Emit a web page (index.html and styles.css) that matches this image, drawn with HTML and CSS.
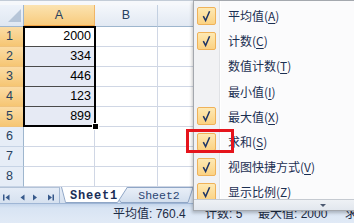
FILE: index.html
```html
<!DOCTYPE html>
<html lang="zh-CN">
<head>
<meta charset="utf-8">
<title>Excel 状态栏</title>
<link rel="stylesheet" href="styles.css">
</head>
<body>
<div class="app">
  <div class="topstrip"></div>

  <div class="sheet">
    <div class="corner">
      <svg width="24" height="22" viewBox="0 0 24 22"><polygon points="21,4 21,17 8,17" fill="#b6c5d8"/></svg>
    </div>
    <div class="ch ch-sel">A</div>
    <div class="ch">B</div>
    <div class="ch">C</div>

    <div class="rh rh-sel">1</div><div class="c a active">2000</div><div class="c"></div><div class="c"></div>
    <div class="rh rh-sel">2</div><div class="c a insel">334</div><div class="c"></div><div class="c"></div>
    <div class="rh rh-sel">3</div><div class="c a insel">446</div><div class="c"></div><div class="c"></div>
    <div class="rh rh-sel">4</div><div class="c a insel">123</div><div class="c"></div><div class="c"></div>
    <div class="rh rh-sel">5</div><div class="c a insel last">899</div><div class="c"></div><div class="c"></div>
    <div class="rh">6</div><div class="c"></div><div class="c"></div><div class="c"></div>
    <div class="rh">7</div><div class="c"></div><div class="c"></div><div class="c"></div>
    <div class="rh">8</div><div class="c"></div><div class="c"></div><div class="c"></div>

    <div class="selection"><span class="handle"></span></div>
  </div>

  <div class="tabbar">
    <div class="nav">
      <svg width="60" height="16" viewBox="0 0 60 16">
        <g fill="#37598b">
          <rect x="3" y="6.5" width="1.5" height="6"/>
          <path d="M9.5 6.5 L9.5 12.5 L5.5 9.5 Z"/>
          <path d="M24.5 6.5 L24.5 12.5 L20.5 9.5 Z"/>
          <path d="M33 6.5 L33 12.5 L37 9.5 Z"/>
          <path d="M48 6.5 L48 12.5 L52 9.5 Z"/>
          <rect x="52.5" y="6.5" width="1.5" height="6"/>
        </g>
      </svg>
    </div>
    <div class="tabs">
      <svg class="tabshape" width="140" height="16" viewBox="0 0 140 16">
        <defs>
          <linearGradient id="g2" x1="0" y1="0" x2="0" y2="1">
            <stop offset="0" stop-color="#e9eff8"/>
            <stop offset="1" stop-color="#d2deed"/>
          </linearGradient>
        </defs>
        <line x1="60" y1="0.5" x2="140" y2="0.5" stroke="#8fa6c6"/>
        <polygon points="50,0.5 132,0.5 127,15.5 60,15.5" fill="url(#g2)" stroke="#8fa6c6"/>
        <polygon points="0,-1 67,-1 57,15.5 4,15.5" fill="#ffffff"/>
        <path d="M0.5 0 L4.5 15.5 L56.5 15.5 L66.5 0" fill="none" stroke="#8fa6c6"/>
      </svg>
      <span class="tab t1">Sheet1</span>
      <span class="tab t2">Sheet2</span>
    </div>
  </div>

  <div class="statusbar">
    <span class="stat s1">平均值: 760.4</span>
    <span class="stat s2">计数: 5</span>
    <span class="stat s3">最大值: 2000</span>
    <span class="stat">求和: 3802</span>
  </div>

  <div class="menu">
    <div class="items">
      <div class="item"><span class="slot"><span class="chk"><svg width="17" height="16" viewBox="0 0 17 16"><path d="M5.3 8.2 L7.6 12.6 L11.6 3.2" fill="none" stroke="#1d3466" stroke-width="1.5"/></svg></span></span><span class="label">平均值(<u>A</u>)</span></div>
      <div class="item"><span class="slot"><span class="chk"><svg width="17" height="16" viewBox="0 0 17 16"><path d="M5.3 8.2 L7.6 12.6 L11.6 3.2" fill="none" stroke="#1d3466" stroke-width="1.5"/></svg></span></span><span class="label">计数(<u>C</u>)</span></div>
      <div class="item"><span class="slot"></span><span class="label">数值计数(<u>T</u>)</span></div>
      <div class="item"><span class="slot"></span><span class="label">最小值(<u>I</u>)</span></div>
      <div class="item"><span class="slot"><span class="chk"><svg width="17" height="16" viewBox="0 0 17 16"><path d="M5.3 8.2 L7.6 12.6 L11.6 3.2" fill="none" stroke="#1d3466" stroke-width="1.5"/></svg></span></span><span class="label">最大值(<u>X</u>)</span></div>
      <div class="item"><span class="slot"><span class="chk"><svg width="17" height="16" viewBox="0 0 17 16"><path d="M5.3 8.2 L7.6 12.6 L11.6 3.2" fill="none" stroke="#1d3466" stroke-width="1.5"/></svg></span></span><span class="label">求和(<u>S</u>)</span></div>
      <div class="item"><span class="slot"><span class="chk"><svg width="17" height="16" viewBox="0 0 17 16"><path d="M5.3 8.2 L7.6 12.6 L11.6 3.2" fill="none" stroke="#1d3466" stroke-width="1.5"/></svg></span></span><span class="label">视图快捷方式(<u>V</u>)</span></div>
      <div class="item"><span class="slot"><span class="chk"><svg width="17" height="16" viewBox="0 0 17 16"><path d="M5.3 8.2 L7.6 12.6 L11.6 3.2" fill="none" stroke="#1d3466" stroke-width="1.5"/></svg></span></span><span class="label">显示比例(<u>Z</u>)</span></div>
    </div>
    <div class="more"><span class="arrow"></span></div>
  </div>

  <div class="highlight"></div>
</div>
</body>
</html>
```

FILE: styles.css
```css
html, body {
  margin: 0;
  padding: 0;
  background: #ffffff;
}

.app {
  position: relative;
  width: 354px;
  height: 223px;
  overflow: hidden;
  font-family: "Liberation Sans", Arial, sans-serif;
}

.topstrip {
  height: 5px;
  box-sizing: border-box;
  border-top: 1px solid #c3ccd7;
  background: #f6f8fb;
}

/* ---------- grid ---------- */
.sheet {
  position: relative;
  display: grid;
  grid-template-columns: 24px 71px 63px 1fr;
  grid-template-rows: 22px repeat(8, 20px);
}

.sheet > div {
  box-sizing: border-box;
}

.corner {
  background: linear-gradient(#eef3fa, #dfe7f2);
  border-right: 1px solid #9eb6ce;
  border-bottom: 1px solid #9eb6ce;
}
.corner svg { display: block; }

.ch {
  background: linear-gradient(#f4f7fb, #e2e9f3);
  border-right: 1px solid #c3d0e1;
  border-bottom: 1px solid #9eb6ce;
  color: #27415f;
  font-size: 12.5px;
  line-height: 21px;
  text-align: center;
}

.ch-sel {
  background: linear-gradient(#fbe3b1, #f8cb7d);
  border-right-color: #f0b566;
  border-bottom: 2px solid #f3a443;
  line-height: 20px;
}

.rh {
  background: #e6edf7;
  border-right: 1px solid #9eb6ce;
  border-bottom: 1px solid #c7d4e6;
  color: #27415f;
  font-size: 12.5px;
  line-height: 19px;
  text-align: center;
  padding-right: 4px;
}

.rh-sel {
  background: linear-gradient(#fbdca5, #f6c673);
  border-bottom-color: #efc27c;
}

.c {
  border-right: 1px solid #d0d7e5;
  border-bottom: 1px solid #d0d7e5;
  font-size: 12.5px;
  line-height: 19px;
  color: #000;
}

.c.a {
  text-align: right;
  padding-right: 3px;
  border-bottom-color: #4a4a4a;
}
.c.active { background: #ffffff; }
.c.insel { background: #e6eaf4; }

.selection {
  position: absolute;
  grid-column: 2 / 3;
  grid-row: 2 / 7;
  top: -1px;
  left: -1px;
  right: -1px;
  bottom: 0;
  border: 2px solid #000;
  z-index: 1;
}

.handle {
  position: absolute;
  right: -4px;
  bottom: -4px;
  width: 5px;
  height: 5px;
  background: #000;
  box-shadow: 0 0 0 1px #fff;
}

/* ---------- sheet tabs ---------- */
.tabbar {
  height: 17px;
  box-sizing: border-box;
  display: flex;
  background: linear-gradient(#e6edf7, #d6e1ef);
  border-bottom: 1px solid #9fb6d5;
}

.nav {
  width: 60px;
  flex: none;
  box-sizing: border-box;
  border-top: 1px solid #b3c3d8;
  border-right: 1px solid #a3b7d2;
}
.nav svg { display: block; }

.tabs {
  position: relative;
  flex: 1;
  display: flex;
  padding-left: 1px;
}

.tabshape {
  position: absolute;
  left: 1px;
  top: 0;
}

.tab {
  position: relative;
  z-index: 1;
  flex: none;
  text-align: center;
  font-family: "Liberation Mono", "Courier New", monospace;
  line-height: 14px;
  padding-top: 2px;
}

.t1 {
  width: 66px;
  font-size: 12px;
  font-weight: bold;
  letter-spacing: 0.8px;
  color: #1a2e57;
}

.t2 {
  width: 64px;
  font-size: 11.5px;
  color: #2c4672;
}

/* ---------- status bar ---------- */
.statusbar {
  height: 19px;
  box-sizing: border-box;
  background: linear-gradient(#c4d5eb 0, #d8e4f3 4px, #e1eaf6 100%);
  display: flex;
  padding-left: 113px;
  padding-top: 2px;
  font-family: "Liberation Sans", "Noto Sans CJK SC", sans-serif;
  font-size: 12px;
  line-height: 16px;
  color: #1c2b45;
  white-space: nowrap;
}

.stat { flex: none; }
.s1 { width: 92px; }
.s2 { width: 53px; }
.s3 { width: 87px; }

/* ---------- context menu ---------- */
.menu {
  position: absolute;
  left: 193px;
  top: 0;
  width: 200px;
  border: 1px solid #a4a8ae;
  background: linear-gradient(to right, #f1f2f4 0, #f1f2f4 25px, #e0e2e5 25px, #e0e2e5 26px, #ffffff 26px, #ffffff 27px, #fbfbfc 27px);
  box-shadow: -1px 2px 3px rgba(0, 0, 0, 0.22);
  z-index: 5;
  font-family: "Noto Sans CJK SC", sans-serif;
  font-size: 12px;
  color: #1b2f52;
}

.items {
  height: 198px;
  box-sizing: border-box;
  padding-top: 2px;
  overflow: hidden;
}

.item {
  height: 25.2px;
  display: flex;
  align-items: center;
  white-space: nowrap;
}

.slot {
  width: 25px;
  flex: none;
  display: flex;
  align-items: center;
}

.chk {
  margin-left: 3px;
  width: 19px;
  height: 18px;
  box-sizing: border-box;
  border: 1px solid #efb259;
  border-radius: 2px;
  background: linear-gradient(#fee9b3, #fbd283);
}
.chk svg { display: block; }

.label {
  padding-left: 9px;
}

.label u {
  text-decoration-thickness: 1px;
  text-underline-offset: 2px;
}

.more {
  height: 11px;
  box-sizing: border-box;
  border-top: 1px solid #c5cad1;
  background: linear-gradient(#eef1f5, #e2e7ee);
  display: flex;
  align-items: center;
  padding-left: 126px;
}

.arrow {
  width: 0;
  height: 0;
  border-left: 3px solid transparent;
  border-right: 3px solid transparent;
  border-top: 3px solid #4b5870;
}

/* ---------- annotation ---------- */
.highlight {
  position: absolute;
  left: 186px;
  top: 129px;
  width: 48px;
  height: 24px;
  box-sizing: border-box;
  border: 3px solid #e5141c;
  z-index: 6;
}
```
